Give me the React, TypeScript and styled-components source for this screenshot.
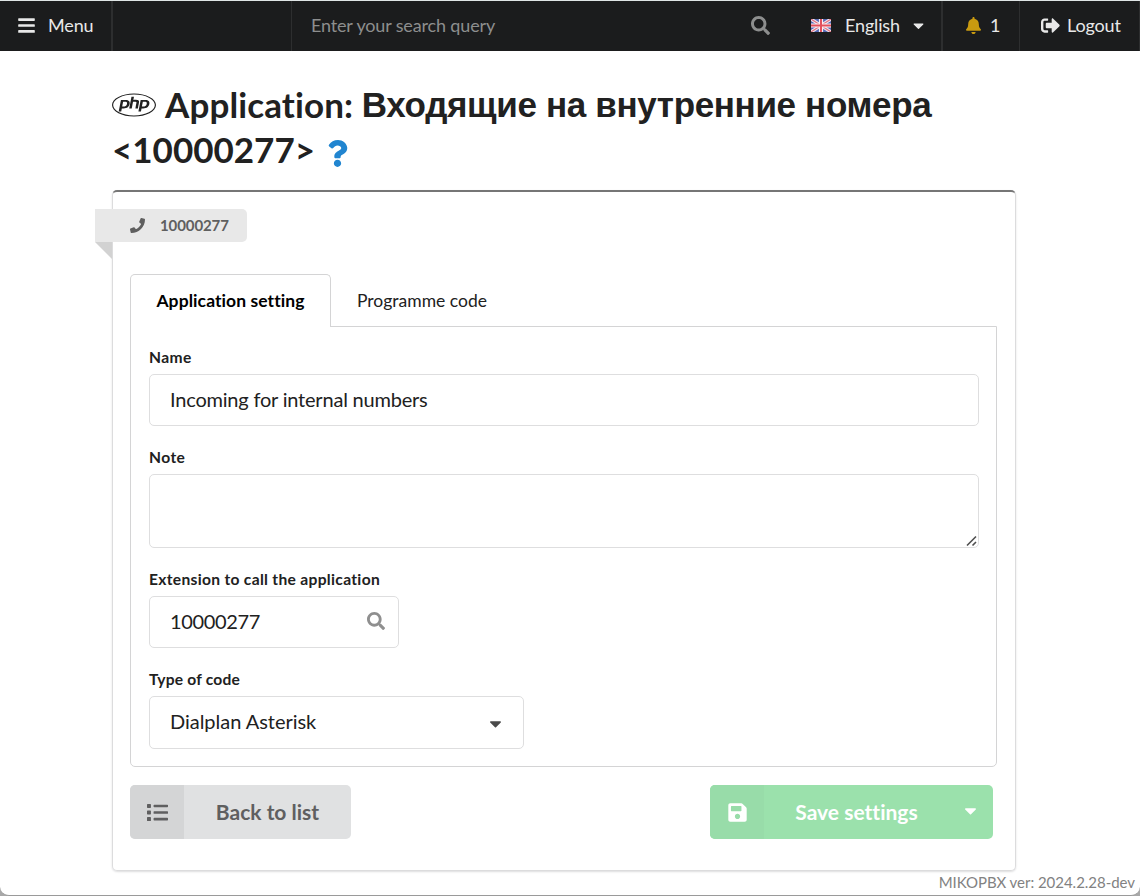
import React from "react";
import styled, { createGlobalStyle } from "styled-components";
import {
  FaBars,
  FaBell,
  FaCaretDown,
  FaList,
  FaPhone,
  FaPhp,
  FaQuestion,
  FaSave,
  FaSearch,
  FaSignOutAlt,
} from "react-icons/fa";

const GlobalStyle = createGlobalStyle`
  * { box-sizing: border-box; }
  body {
    margin: 0;
    background: #a8a8a8;
    font-family: Lato, "Liberation Sans", Arial, sans-serif;
    font-size: 17.5px;
    font-variant-ligatures: none;
    color: #212121;
  }
  svg { display: block; flex: none; }
`;

const Page = styled.div`
  height: 896px;
  display: flex;
  flex-direction: column;
  background: #fff;
  border-top: 1px solid #dfe5e5;
  border-bottom: 1px solid #9a9a9a;
  border-radius: 0 0 9px 9px;
  overflow: hidden;
`;

const TopBar = styled.header`
  height: 50px;
  flex: none;
  display: flex;
  background: #1b1c1d;
  color: #e8e8e8;
  font-size: 18px;
  letter-spacing: -0.15px;
  line-height: 22px;
`;

const BarItem = styled.div<{ $width: number; $pad: number; $gap: number; $line?: number }>`
  width: ${(p) => p.$width}px;
  padding-left: ${(p) => p.$pad}px;
  padding-bottom: 2px;
  display: flex;
  align-items: center;
  gap: ${(p) => p.$gap}px;
  white-space: nowrap;
  border-right: ${(p) => p.$line ?? 0}px solid #2d2e2f;
`;

const SearchBox = styled.div`
  width: 491px;
  padding: 0 13px 2px 19px;
  display: flex;
  align-items: center;
  justify-content: space-between;
  color: #8d8e8e;
`;

const Container = styled.main`
  width: 904px;
  margin: 31px 0 0 112px;
`;

const Title = styled.h1`
  margin: 0;
  font-size: 35px;
  line-height: 45px;
  font-weight: 700;
`;

const TitleLine = styled.div`
  display: flex;
  align-items: center;
  height: 45px;
  white-space: pre;
`;

const LatinText = styled.span<{ $spacing: number }>`
  letter-spacing: ${(p) => p.$spacing}px;
`;

const CyrillicText = styled.span<{ $spacing: number }>`
  font-family: "Liberation Sans", Arial, sans-serif;
  letter-spacing: ${(p) => p.$spacing}px;
`;

const PhpMark = styled.span`
  width: 44px;
  margin-right: 9px;
`;

const HelpMark = styled.span`
  margin: 7px 0 0 9px;
  color: #2185d0;
`;

const Segment = styled.section`
  height: 681px;
  margin-top: 18px;
  padding: 17px 18px 0 17px;
  border: 1px solid #dcdcdd;
  border-top: 2px solid #767676;
  border-radius: 5px;
  box-shadow: 0 1px 2px rgba(34, 36, 38, 0.15);
`;

const Ribbon = styled.div`
  position: relative;
  width: 152px;
  height: 33px;
  margin-left: -35px;
  padding: 0 0 1px 35px;
  display: flex;
  align-items: center;
  gap: 15px;
  border-radius: 0 5px 5px 0;
  background: #e8e8e8;
  color: #5f5f5f;
  font-size: 15px;
  letter-spacing: -0.1px;
  font-weight: 700;

  &::after {
    content: "";
    position: absolute;
    left: 0;
    top: 100%;
    border-style: solid;
    border-width: 0 17px 17px 0;
    border-color: transparent #d2d2d2 transparent transparent;
  }
`;

const Tabs = styled.nav`
  position: relative;
  display: flex;
  margin: 32px 0 -1px;
`;

const ActiveTab = styled.div`
  width: 201px;
  height: 53px;
  padding-bottom: 1px;
  display: flex;
  align-items: center;
  justify-content: center;
  background: #fff;
  border: 1px solid #d4d4d5;
  border-bottom: 0;
  border-radius: 5px 5px 0 0;
  color: #000;
  font-weight: 700;
  font-size: 17.5px;
  letter-spacing: 0.08px;
  white-space: nowrap;
`;

const Tab = styled.div`
  height: 53px;
  padding-left: 26px;
  display: flex;
  align-items: center;
  font-size: 17.5px;
`;

const TabPane = styled.div`
  height: 441px;
  padding: 20px 17px 0 18px;
  border: 1px solid #d4d4d5;
  border-radius: 0 0 5px 5px;
`;

const Field = styled.div`
  margin-bottom: 21px;
`;

const Label = styled.label<{ $spacing?: number }>`
  display: block;
  margin-bottom: 7px;
  font-size: 15.6px;
  letter-spacing: ${(p) => p.$spacing ?? 0.2}px;
  line-height: 20px;
  font-weight: 700;
`;

const Control = styled.div<{
  $width?: string;
  $height: number;
  $right?: number;
  $spacing?: number;
}>`
  width: ${(p) => p.$width ?? "100%"};
  height: ${(p) => p.$height}px;
  padding: 0 ${(p) => p.$right ?? 20}px 2px 20px;
  display: flex;
  align-items: center;
  justify-content: space-between;
  border: 1px solid #dededf;
  border-radius: 5px;
  font-size: 20px;
  letter-spacing: ${(p) => p.$spacing ?? 0}px;
`;

const SelectedType = styled.span`
  padding-bottom: 2px;
`;

const NoteArea = styled.div`
  height: 74px;
  display: flex;
  align-items: flex-end;
  justify-content: flex-end;
  border: 1px solid #dededf;
  border-radius: 5px;
`;

const Actions = styled.div`
  display: flex;
  justify-content: space-between;
  margin: 18px 4px 0 0;
`;

const Button = styled.button<{ $width: number; $green?: boolean }>`
  width: ${(p) => p.$width}px;
  height: 54px;
  padding: 0;
  display: flex;
  align-items: center;
  border: 0;
  border-radius: 5px;
  overflow: hidden;
  background: ${(p) => (p.$green ? "#9be1ac" : "#e0e1e2")};
  color: ${(p) => (p.$green ? "#fff" : "#5f5f60")};
  font-family: Lato, sans-serif;
  font-size: 21px;
  font-weight: 700;
  font-variant-ligatures: none;
  white-space: nowrap;
`;

const ButtonIcon = styled.span<{ $green?: boolean }>`
  width: 54px;
  height: 54px;
  flex: none;
  display: flex;
  align-items: center;
  justify-content: center;
  background: ${(p) => (p.$green ? "#98dca9" : "#d4d5d6")};
`;

const ButtonText = styled.span<{ $width: number }>`
  width: ${(p) => p.$width}px;
  padding-bottom: 2px;
  text-align: center;
`;

const MenuCaret = styled(FaCaretDown)`
  margin: 0 0 4px 12px;
`;

const LanguageCaret = styled(FaCaretDown)`
  margin-left: -4px;
`;

const TypeCaret = styled(FaCaretDown)`
  margin: 3px -2px 0 0;
  color: #4a4a4a;
`;

const Footer = styled.footer`
  margin-top: 1px;
  padding-right: 5px;
  text-align: right;
  font-size: 15px;
  letter-spacing: -0.03px;
  line-height: 20px;
  color: #828282;
`;

const Flag = styled.svg`
  margin-top: 1px;
`;

function UkFlag() {
  return (
    <Flag width="20" height="13" viewBox="0 0 20 13">
      <rect width="20" height="13" fill="#5468b4" />
      <path d="M0 0L20 13M20 0L0 13" stroke="#f0e6ee" strokeWidth="3.2" />
      <path d="M0 0L20 13M20 0L0 13" stroke="#e0707f" strokeWidth="1.1" />
      <path d="M10 0V13M0 6.5H20" stroke="#fbeef0" strokeWidth="4.2" />
      <path d="M10 0V13M0 6.5H20" stroke="#e2505c" strokeWidth="2" />
    </Flag>
  );
}

function ResizeGrip() {
  return (
    <svg width="12" height="12" viewBox="0 0 12 12" stroke="#505050" strokeWidth="1.6">
      <path d="M1 10.5L10 1.5M6.5 10.5L10 7" />
    </svg>
  );
}

export default function App() {
  return (
    <>
      <GlobalStyle />
      <Page>
        <TopBar>
          <BarItem $width={113} $pad={17} $gap={12} $line={2}>
            <FaBars size={19} />
            <span>Menu</span>
          </BarItem>
          <BarItem $width={179} $pad={0} $gap={0} $line={1} />
          <SearchBox>
            <span>Enter your search query</span>
            <FaSearch size={19} />
          </SearchBox>
          <BarItem $width={160} $pad={28} $gap={14} $line={2}>
            <UkFlag />
            <span>English</span>
            <LanguageCaret size={17} />
          </BarItem>
          <BarItem $width={77} $pad={22} $gap={8} $line={1}>
            <FaBell size={17} color="#c99a10" />
            <span>1</span>
          </BarItem>
          <BarItem $width={120} $pad={21} $gap={7} $line={1}>
            <FaSignOutAlt size={19} />
            <span>Logout</span>
          </BarItem>
        </TopBar>

        <Container>
          <Title>
            <TitleLine>
              <PhpMark>
                <FaPhp size={44} />
              </PhpMark>
              <LatinText $spacing={0.12}>Application: </LatinText>
              <CyrillicText $spacing={-0.34}>Входящие на внутренние номера</CyrillicText>
            </TitleLine>
            <TitleLine>
              <LatinText $spacing={0}>&lt;10000277&gt;</LatinText>
              <HelpMark>
                <FaQuestion size={27} />
              </HelpMark>
            </TitleLine>
          </Title>

          <Segment>
            <Ribbon>
              <FaPhone size={15} />
              <span>10000277</span>
            </Ribbon>
            <Tabs>
              <ActiveTab>Application setting</ActiveTab>
              <Tab>Programme code</Tab>
            </Tabs>
            <TabPane>
              <Field>
                <Label $spacing={0.4}>Name</Label>
                <Control $height={52} $spacing={-0.2}>
                  Incoming for internal numbers
                </Control>
              </Field>
              <Field>
                <Label $spacing={0.4}>Note</Label>
                <NoteArea>
                  <ResizeGrip />
                </NoteArea>
              </Field>
              <Field>
                <Label $spacing={0.31}>Extension to call the application</Label>
                <Control $width="250px" $height={52} $right={13} $spacing={-0.35}>
                  <span>10000277</span>
                  <FaSearch size={18} color="#8f8f8f" />
                </Control>
              </Field>
              <Field>
                <Label>Type of code</Label>
                <Control $width="375px" $height={53} $spacing={-0.03}>
                  <SelectedType>Dialplan Asterisk</SelectedType>
                  <TypeCaret size={19} />
                </Control>
              </Field>
            </TabPane>
            <Actions>
              <Button $width={221}>
                <ButtonIcon>
                  <FaList size={21} />
                </ButtonIcon>
                <ButtonText $width={167}>Back to list</ButtonText>
              </Button>
              <Button $width={283} $green>
                <ButtonIcon $green>
                  <FaSave size={21} />
                </ButtonIcon>
                <ButtonText $width={185}>Save settings</ButtonText>
                <MenuCaret size={19} />
              </Button>
            </Actions>
          </Segment>
        </Container>
        <Footer>MIKOPBX ver: 2024.2.28-dev</Footer>
      </Page>
    </>
  );
}
